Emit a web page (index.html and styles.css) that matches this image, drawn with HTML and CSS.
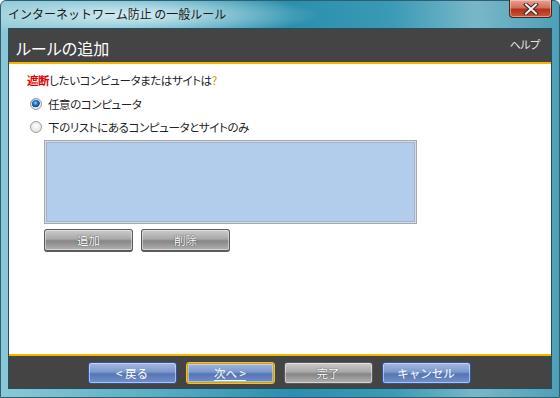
FILE: index.html
```html
<!DOCTYPE html>
<html lang="ja">
<head>
  <meta charset="UTF-8">
  <title>インターネットワーム防止 の一般ルール</title>
  <link rel="stylesheet" href="styles.css">
</head>
<body>
  <div class="window">
    <div class="titlebar">
      <span class="title">インターネットワーム防止 の一般ルール</span>
      <button class="close-btn" title="閉じる">
        <svg width="16" height="12" viewBox="0 0 16 12">
          <path d="M3 1.5 L13 10.5 M13 1.5 L3 10.5" stroke="#3a2a28" stroke-width="4" stroke-linecap="square"/>
          <path d="M3 1.5 L13 10.5 M13 1.5 L3 10.5" stroke="#f4f0ee" stroke-width="2" stroke-linecap="square"/>
        </svg>
      </button>
    </div>

    <div class="client">
      <div class="header">
        <h1>ルールの追加</h1>
        <a class="help-link">ヘルプ</a>
      </div>

      <div class="content">
        <p class="question"><span class="warn">遮断</span>したいコンピュータまたはサイトは<span class="qmark">?</span></p>

        <label class="radio-row">
          <span class="radio checked"></span>任意のコンピュータ
        </label>
        <label class="radio-row">
          <span class="radio"></span>下のリストにあるコンピュータとサイトのみ
        </label>

        <div class="site-list"></div>

        <div class="list-buttons">
          <button class="btn gray">追加</button>
          <button class="btn gray">削除</button>
        </div>
      </div>

      <div class="footer">
        <button class="btn blue">&lt; 戻る</button>
        <button class="btn blue focused"><u>次へ &gt;</u></button>
        <button class="btn gray">完了</button>
        <button class="btn blue">キャンセル</button>
      </div>
    </div>
  </div>
</body>
</html>
```

FILE: styles.css
```css
* {
  box-sizing: border-box;
}

body {
  margin: 0;
  font-family: "Noto Sans CJK JP", "Noto Sans", sans-serif;
  font-size: 11px;
  letter-spacing: -0.4px;
  font-feature-settings: "palt";
  background: #fff;
}

.window {
  width: 560px;
  height: 398px;
  display: flex;
  flex-direction: column;
  padding: 0 7px 8px 7px;
  border: 1px solid #2d5f70;
  border-radius: 6px 6px 0 0;
  background:
    radial-gradient(ellipse 190px 22px at 130px 14px, rgba(235, 248, 250, 0.85), rgba(235, 248, 250, 0) 100%),
    linear-gradient(90deg, #8cc7d6 0%, #5fb0c7 25%, #2a8fad 52%, #3b9ab5 70%, #79b7c8 85%, #4f9fb6 100%);
}

.titlebar {
  height: 27px;
  display: flex;
  align-items: flex-start;
  justify-content: space-between;
}

.title {
  margin-top: 4px;
  color: #1a1a1a;
  font-size: 12px;
  line-height: 18px;
  letter-spacing: 0;
  font-feature-settings: normal;
}

.close-btn {
  width: 43px;
  height: 18px;
  margin-top: -1px;
  padding: 0;
  display: flex;
  align-items: center;
  justify-content: center;
  border: 1px solid #4a2420;
  border-top: none;
  border-radius: 0 0 4px 4px;
  background: linear-gradient(#e3a597 0%, #d46e58 45%, #b2321c 55%, #c8563c 100%);
  box-shadow: inset 0 0 0 1px rgba(255, 220, 210, 0.5);
}

.client {
  flex: 1;
  display: flex;
  flex-direction: column;
  background: #fff;
  border: 1px solid #1f4f60;
}

.header {
  height: 35px;
  display: flex;
  align-items: flex-start;
  justify-content: space-between;
  background: #444;
  border-bottom: 2px solid #f6b500;
  padding: 0 11px 0 7px;
}

.header h1 {
  margin: 8px 0 0;
  font-size: 16px;
  font-weight: normal;
  line-height: 22px;
  letter-spacing: 0;
  color: #fff;
}

.help-link {
  margin-top: 7px;
  font-size: 11px;
  line-height: 16px;
  color: #e4e4e4;
}

.content {
  flex: 1;
  padding: 8px 0 0 18px;
  border-bottom: 2px solid #f6b500;
}

.question {
  margin: 0 0 4px;
  font-size: 11.5px;
  line-height: 16px;
  color: #222;
}

.warn {
  color: #e00000;
  font-weight: bold;
}

.qmark {
  color: #d08a00;
}

.radio-row {
  height: 23px;
  display: flex;
  align-items: center;
  gap: 6px;
  padding-left: 3px;
  font-size: 11.5px;
  color: #222;
}

.radio {
  width: 12px;
  height: 12px;
  border-radius: 50%;
  border: 1px solid #9a9a9a;
  background: radial-gradient(circle at 50% 40%, #fdfdfd, #d8d8d8);
  box-shadow: inset 0 0 0 1px #eee;
}

.radio.checked {
  background: radial-gradient(circle at 45% 40%, #9fd4f4 0, #1a7dd0 2px, #0b4c98 4px, #dcdcdc 4.5px, #f4f4f4 100%);
}

.site-list {
  width: 373px;
  height: 84px;
  margin: 2px 0 0 17px;
  background: #b1cdeb;
  border: 1px solid #a2a9b2;
  box-shadow: inset 0 0 0 1px #d2dcea, inset 0 0 0 2px #a8b4c4;
}

.list-buttons {
  display: flex;
  gap: 8px;
  margin: 5px 0 0 17px;
}

.btn {
  width: 89px;
  height: 23px;
  padding: 0;
  font-family: inherit;
  font-size: 11.5px;
  color: #fff;
  border-radius: 3px;
  cursor: pointer;
}

.btn.gray {
  border: 1px solid #5a5a5a;
  border-bottom-width: 2px;
  background: linear-gradient(#cbcbcb 0%, #a8a8a8 45%, #868686 55%, #b2b2b2 100%);
  box-shadow: inset 0 0 0 1px rgba(255, 255, 255, 0.45);
  text-shadow: 0 0 1px #4a4a4a, 0 0 1px #4a4a4a;
}

.btn.blue {
  height: 22px;
  border: 1px solid #2c56a8;
  background: linear-gradient(#a4b9dd 0%, #7b98cc 45%, #5475b5 55%, #7592c8 100%);
  box-shadow: inset 0 0 0 1px rgba(225, 235, 255, 0.55);
}

.btn.focused {
  border: 1px solid #f1c21b;
  box-shadow: inset 0 0 0 1px #c9a028, inset 0 0 0 2px rgba(225, 235, 255, 0.5);
}

.btn u {
  text-underline-offset: 2px;
}

.footer {
  height: 32px;
  display: flex;
  justify-content: center;
  align-items: flex-start;
  gap: 9px;
  padding: 6px 2px 0 0;
  background: #444;
}

.footer .btn.gray {
  height: 22px;
  border-bottom-width: 1px;
}
```
